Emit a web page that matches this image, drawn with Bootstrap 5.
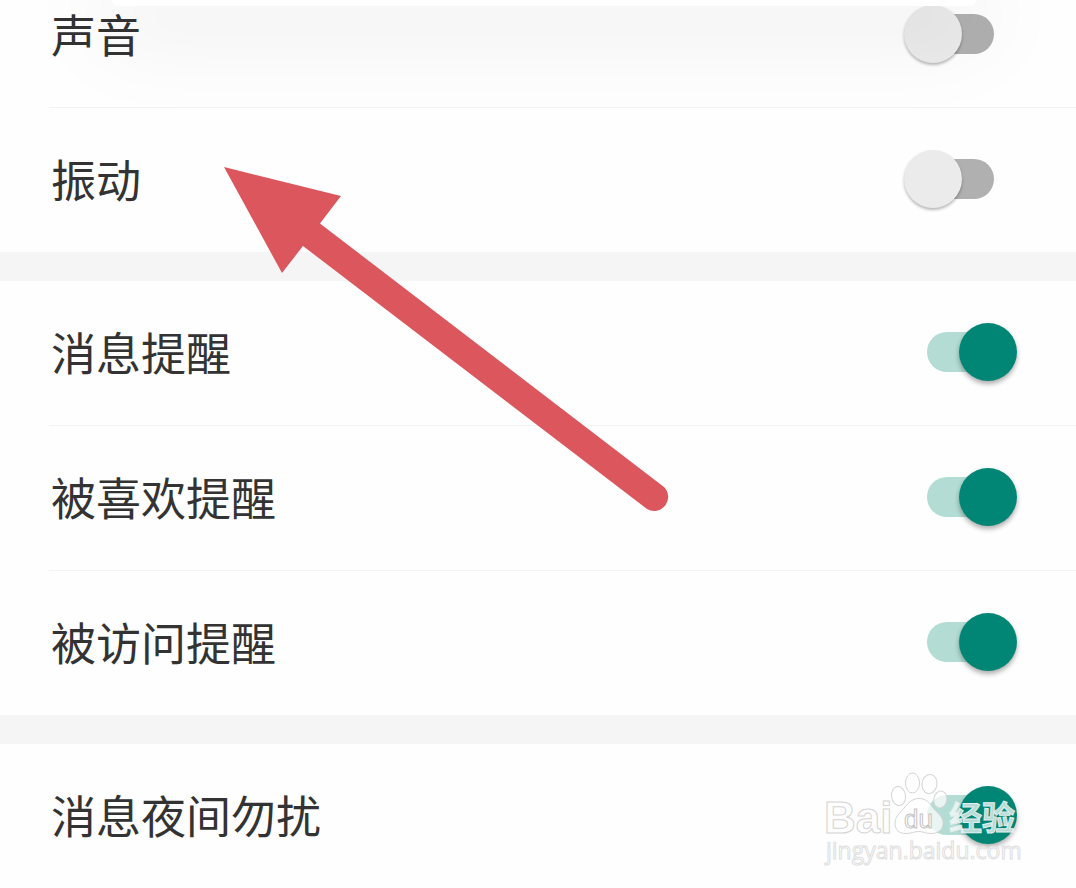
<!DOCTYPE html>
<html lang="zh-CN">
<head>
<meta charset="utf-8">
<meta name="viewport" content="width=device-width, initial-scale=1">
<title>消息通知设置</title>
<link href="https://cdn.jsdelivr.net/npm/bootstrap@5.3.0/dist/css/bootstrap.min.css" rel="stylesheet">
<style>
  body { background: #fefefe; color: #333; font-family: "Noto Sans CJK SC", sans-serif; overflow-x: hidden; }
  .settings-group + .settings-group { border-top: 29px solid #f5f5f5; }
  .setting-row { margin-left: 49px; padding: 41px 59px 43px 2px; }
  .setting-row + .setting-row { border-top: 1px solid #f3f3f3; }
  .setting-row.is-cut { padding-top: 4px; }
  .setting-name { font-size: 45px; line-height: 60px; }

  .toggle { appearance: none; display: grid; align-items: center; flex: none; width: 113px; height: 58px; margin: 0; cursor: pointer; }
  .toggle::before, .toggle::after { content: ""; grid-area: 1 / 1; }
  .toggle::before { justify-self: center; width: 67px; height: 40px; border-radius: 20px; background: #b0b0b0; }
  .toggle::after { justify-self: start; width: 58px; height: 58px; border-radius: 50%; background: #ebebeb; box-shadow: 0 2px 3px rgba(0,0,0,.28); }
  .toggle:checked::before { background: #b2dcd4; }
  .toggle:checked::after { justify-self: end; background: #018675; box-shadow: 0 3px 5px rgba(0,0,0,.32); }

  .sheet-edge { left: 112px; right: 100px; height: 6px; border-radius: 0 0 20px 20px; background: #fff; box-shadow: 0 10px 90px 14px rgba(0,0,0,.1); pointer-events: none; }
  .pointer-arrow { left: 224px; top: 167px; pointer-events: none; }
  .watermark { right: 52px; bottom: 14px; pointer-events: none; }
</style>
</head>
<body>
<main class="position-relative overflow-hidden">
  <section class="settings-group">
    <div class="setting-row is-cut d-flex justify-content-between align-items-center">
      <label class="setting-name" for="sound">声音</label>
      <input class="toggle" type="checkbox" role="switch" id="sound">
    </div>
    <div class="setting-row d-flex justify-content-between align-items-center">
      <label class="setting-name" for="vibrate">振动</label>
      <input class="toggle" type="checkbox" role="switch" id="vibrate">
    </div>
  </section>
  <section class="settings-group">
    <div class="setting-row d-flex justify-content-between align-items-center">
      <label class="setting-name" for="message">消息提醒</label>
      <input class="toggle" type="checkbox" role="switch" id="message" checked>
    </div>
    <div class="setting-row d-flex justify-content-between align-items-center">
      <label class="setting-name" for="liked">被喜欢提醒</label>
      <input class="toggle" type="checkbox" role="switch" id="liked" checked>
    </div>
    <div class="setting-row d-flex justify-content-between align-items-center">
      <label class="setting-name" for="visited">被访问提醒</label>
      <input class="toggle" type="checkbox" role="switch" id="visited" checked>
    </div>
  </section>
  <section class="settings-group position-relative">
    <div class="setting-row d-flex justify-content-between align-items-center">
      <label class="setting-name" for="night">消息夜间勿扰</label>
      <input class="toggle" type="checkbox" role="switch" id="night" checked>
    </div>
    <svg class="watermark position-absolute" width="204" height="108" viewBox="820 765 204 108" fill="#fff" fill-opacity=".72" stroke="#d4d4d4" stroke-width="1" aria-hidden="true">
      <text x="824" y="832" font-family="Liberation Sans, sans-serif" font-weight="700" font-size="44">Bai</text>
      <ellipse cx="898.5" cy="795" rx="7" ry="9.5" transform="rotate(-8 898.5 795)"/>
      <ellipse cx="912.5" cy="782" rx="7" ry="10"/>
      <ellipse cx="929.5" cy="783" rx="7.5" ry="9.5" transform="rotate(8 929.5 783)"/>
      <ellipse cx="940.3" cy="798.5" rx="6.5" ry="8.5" transform="rotate(12 940.3 798.5)"/>
      <path d="M919 797.500C926 797.500 930 802 933 807C937 812 943 815 943 822C943 829 938 832.500 931 832.500C926 832.500 923 830.500 919 830.500C914 830.500 911 832.500 906 832.500C899 832.500 895 829 895 822C895 815 901 811 905 806C909 801 913 797.500 919 797.500Z"/>
      <text x="904" y="827" font-family="Liberation Sans, sans-serif" font-size="26" stroke="#c4c4c4">du</text>
      <text x="949" y="829" font-family="Noto Sans CJK SC, sans-serif" font-weight="700" font-size="33" stroke="#e3eeec">经验</text>
      <text x="826" y="858" font-family="Open Sans, sans-serif" font-size="23" stroke="#dedede">jingyan.baidu.com</text>
    </svg>
  </section>

  <div class="sheet-edge position-absolute top-0"></div>
  <svg class="pointer-arrow position-absolute" width="446" height="346" viewBox="0 0 446 346" aria-hidden="true">
    <path d="M0 0L117 29L96 56.500L440 320A14 14 0 0 1 423 342L79 79L58 106Z" fill="#dc575d"/>
  </svg>
</main>
<script src="https://cdn.jsdelivr.net/npm/bootstrap@5.3.0/dist/js/bootstrap.bundle.min.js"></script>
</body>
</html>
